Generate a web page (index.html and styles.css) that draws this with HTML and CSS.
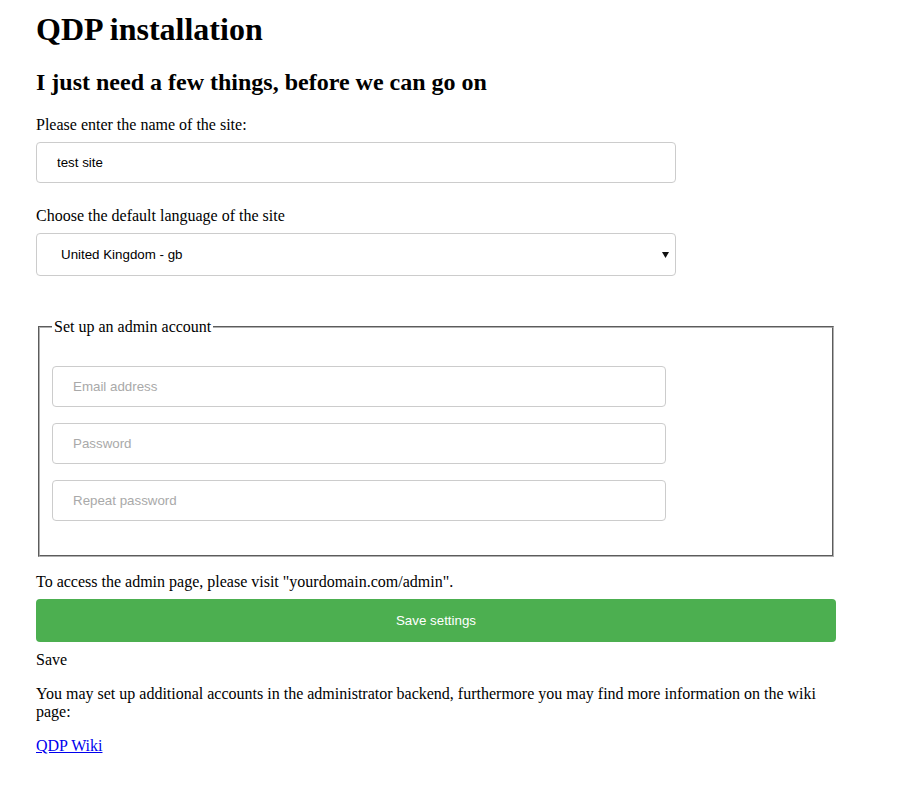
FILE: index.html
```html
<!DOCTYPE html>
<html lang="en">
<head>
<meta charset="utf-8">
<title>QDP installation</title>
<link rel="stylesheet" href="styles.css">
</head>
<body>
<div class="page">
  <h1 class="title">QDP installation</h1>
  <h2 class="subtitle">I just need a few things, before we can go on</h2>

  <form class="form">
    <label class="label" for="sitename">Please enter the name of the site:</label>
    <input class="field field-wide" id="sitename" type="text" value="test site">

    <label class="label label-gap" for="lang">Choose the default language of the site</label>
    <div class="select-wrap">
      <select class="field field-wide select" id="lang">
        <option>United Kingdom - gb</option>
      </select>
      <svg class="select-arrow" width="7" height="6" viewBox="0 0 7 6"><path d="M0 0H7L3.5 6Z" fill="#111"/></svg>
    </div>

    <fieldset class="admin">
      <legend class="legend">Set up an admin account</legend>
      <div class="admin-fields">
        <input class="field field-admin" type="text" placeholder="Email address">
        <input class="field field-admin" type="password" placeholder="Password">
        <input class="field field-admin" type="password" placeholder="Repeat password">
      </div>
    </fieldset>

    <p class="notice">To access the admin page, please visit "yourdomain.com/admin".</p>
    <button class="save" type="button">Save settings</button>
    <div class="save-label">Save</div>
  </form>

  <p class="info">You may set up additional accounts in the administrator backend, furthermore you may find more information on the wiki page:</p>
  <a class="wiki" href="#">QDP Wiki</a>
</div>
</body>
</html>
```

FILE: styles.css
```css
html, body {
  margin: 0;
  padding: 0;
  background: #ffffff;
}

body {
  font-family: "Liberation Serif", "Times New Roman", serif;
  font-size: 16px;
  line-height: 18px;
  color: #000;
}

.page {
  width: 800px;
  padding: 0 36px;
}

.title {
  font-size: 32px;
  line-height: 37px;
  font-weight: bold;
  margin: 11px 0 0;
}

.subtitle {
  font-size: 24px;
  line-height: 28px;
  font-weight: bold;
  margin: 20px 0 0;
}

.form {
  display: flex;
  flex-direction: column;
  align-items: flex-start;
  margin-top: 20px;
}

.label {
  display: block;
  margin: 0;
}

.label-gap {
  margin-top: 24px;
}

.field {
  display: block;
  box-sizing: border-box;
  height: 41px;
  padding: 0 20px;
  border: 1px solid #cccccc;
  border-radius: 4px;
  background: #fff;
  font-family: "Liberation Sans", Arial, sans-serif;
  font-size: 13.333px;
  color: #000;
  outline: none;
}

.field::placeholder {
  color: #a9a9a9;
}

.field-wide {
  width: 640px;
  margin-top: 8px;
}

.select-wrap {
  position: relative;
  width: 640px;
  margin-top: 8px;
}

.select {
  -webkit-appearance: none;
  appearance: none;
  height: 43px;
  padding-left: 24px;
  margin-top: 0;
}

.select-arrow {
  position: absolute;
  right: 7px;
  top: 19px;
}

.admin {
  box-sizing: border-box;
  width: 796px;
  margin: 42px 2px 0;
  padding: 0 12px 10px;
  border: 2px groove #b0b0b0;
}

.legend {
  padding: 0 2px;
  margin-left: 0;
  font-size: 16px;
  line-height: 18px;
}

.admin-fields {
  display: flex;
  flex-direction: column;
  gap: 16px;
  margin: 30px 0 24px;
}

.field-admin {
  width: 80%;
}

.notice {
  margin: 16px 0 0;
}

.save {
  display: block;
  width: 800px;
  height: 43px;
  margin-top: 8px;
  border: none;
  border-radius: 4px;
  background: #4caf50;
  color: #fff;
  font-family: "Liberation Sans", Arial, sans-serif;
  font-size: 13.333px;
  cursor: pointer;
}

.save-label {
  margin-top: 9px;
}

.info {
  margin: 16px 0 0;
}

.wiki {
  display: inline-block;
  margin-top: 16px;
  color: #0000ee;
  text-decoration: underline;
}
```
